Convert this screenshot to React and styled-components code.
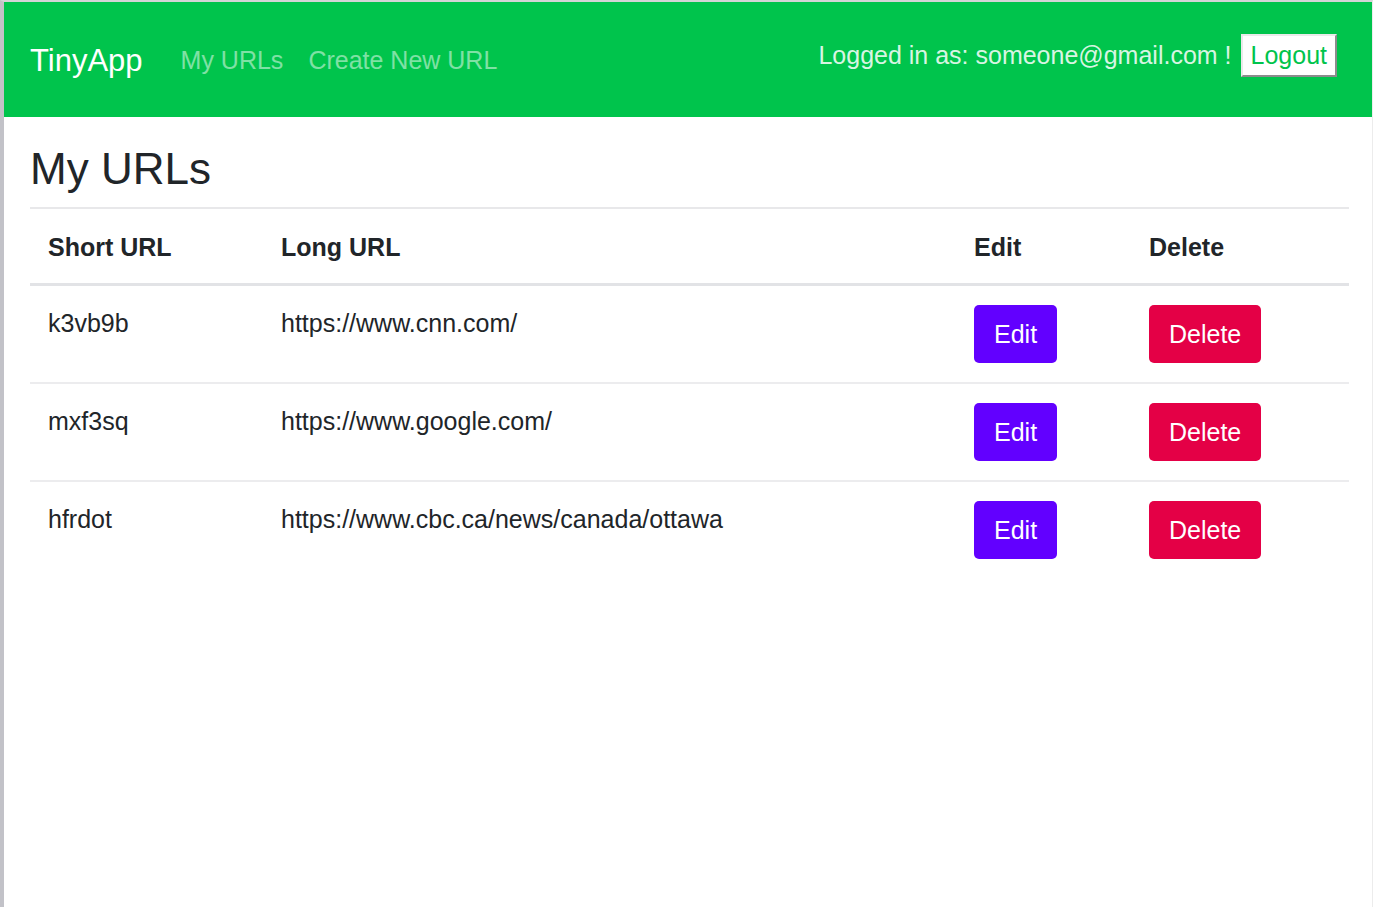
import React from "react";
import styled, { createGlobalStyle } from "styled-components";

const GlobalStyle = createGlobalStyle`
  * {
    box-sizing: border-box;
  }
  body {
    margin: 0;
    font-family: "Liberation Sans", Arial, sans-serif;
    color: #212529;
    background: #fff;
  }
`;

const Page = styled.div`
  min-height: 100vh;
  border-top: 2px solid #d4d4d6;
  border-left: 4px solid #c2c2c8;
  border-right: 1px solid #ececec;
`;

const Nav = styled.nav`
  display: flex;
  align-items: center;
  height: 115px;
  padding: 0 35px 0 26px;
  background-color: #00c44c;
`;

const Brand = styled.a`
  font-size: 31px;
  color: #fff;
  text-decoration: none;
  margin-right: 38px;
  margin-top: 2px;
`;

const NavLinks = styled.div`
  display: flex;
  gap: 25px;
  margin-top: 2px;
`;

const NavLink = styled.a`
  font-size: 25px;
  color: rgba(255, 255, 255, 0.5);
  text-decoration: none;
`;

const UserBox = styled.div`
  display: flex;
  align-items: center;
  gap: 9px;
  margin-left: auto;
  margin-bottom: 9px;
`;

const UserText = styled.span`
  font-size: 25px;
  color: rgba(255, 255, 255, 0.86);
`;

const LogoutButton = styled.button`
  height: 43px;
  padding: 0 8px;
  font-family: inherit;
  font-size: 25px;
  color: #00c44c;
  background: #fff;
  border: 2px solid;
  border-color: #eaeaea #8c8c8c #8c8c8c #eaeaea;
  cursor: pointer;
`;

const Main = styled.main`
  padding: 0 23px 0 26px;
`;

const Title = styled.h3`
  margin: 26px 0 11px;
  font-size: 44px;
  font-weight: 400;
  line-height: 1.2;
`;

const Rule = styled.hr`
  margin: 0;
  border: 0;
  border-top: 2px solid #e8e8ea;
`;

const Table = styled.table`
  width: 1319px;
  table-layout: fixed;
  border-collapse: collapse;
  font-size: 25px;
  line-height: 1.5;
`;

const Th = styled.th`
  width: ${(p) => p.w}px;
  padding: 20px 18px 17px 18px;
  text-align: left;
  font-weight: 700;
  border-bottom: 3px solid #e2e3e6;
`;

const Tr = styled.tr`
  & + & td {
    border-top: 2px solid #ececee;
  }
`;

const Td = styled.td`
  padding: 19px 18px 19px 18px;
  vertical-align: top;
`;

const ActionButton = styled.button`
  height: 58px;
  padding: 0 20px;
  font-family: inherit;
  font-size: 25px;
  color: #fff;
  background-color: ${(p) => (p.danger ? "#e40046" : "#6200ff")};
  border: none;
  border-radius: 5px;
  cursor: pointer;
`;

const urls = [
  { short: "k3vb9b", long: "https://www.cnn.com/" },
  { short: "mxf3sq", long: "https://www.google.com/" },
  { short: "hfrdot", long: "https://www.cbc.ca/news/canada/ottawa" },
];

const App = () => {
  return (
    <>
      <GlobalStyle />
      <Page>
        <Nav>
          <Brand href="#">TinyApp</Brand>
          <NavLinks>
            <NavLink href="#">My URLs</NavLink>
            <NavLink href="#">Create New URL</NavLink>
          </NavLinks>
          <UserBox>
            <UserText>Logged in as: someone@gmail.com !</UserText>
            <LogoutButton>Logout</LogoutButton>
          </UserBox>
        </Nav>
        <Main>
          <Title>My URLs</Title>
          <Rule />
          <Table>
            <thead>
              <tr>
                <Th w={233}>Short URL</Th>
                <Th w={693}>Long URL</Th>
                <Th w={175}>Edit</Th>
                <Th w={218}>Delete</Th>
              </tr>
            </thead>
            <tbody>
              {urls.map((url) => (
                <Tr key={url.short}>
                  <Td>{url.short}</Td>
                  <Td>{url.long}</Td>
                  <Td>
                    <ActionButton>Edit</ActionButton>
                  </Td>
                  <Td>
                    <ActionButton danger>Delete</ActionButton>
                  </Td>
                </Tr>
              ))}
            </tbody>
          </Table>
        </Main>
      </Page>
    </>
  );
};

export default App;
